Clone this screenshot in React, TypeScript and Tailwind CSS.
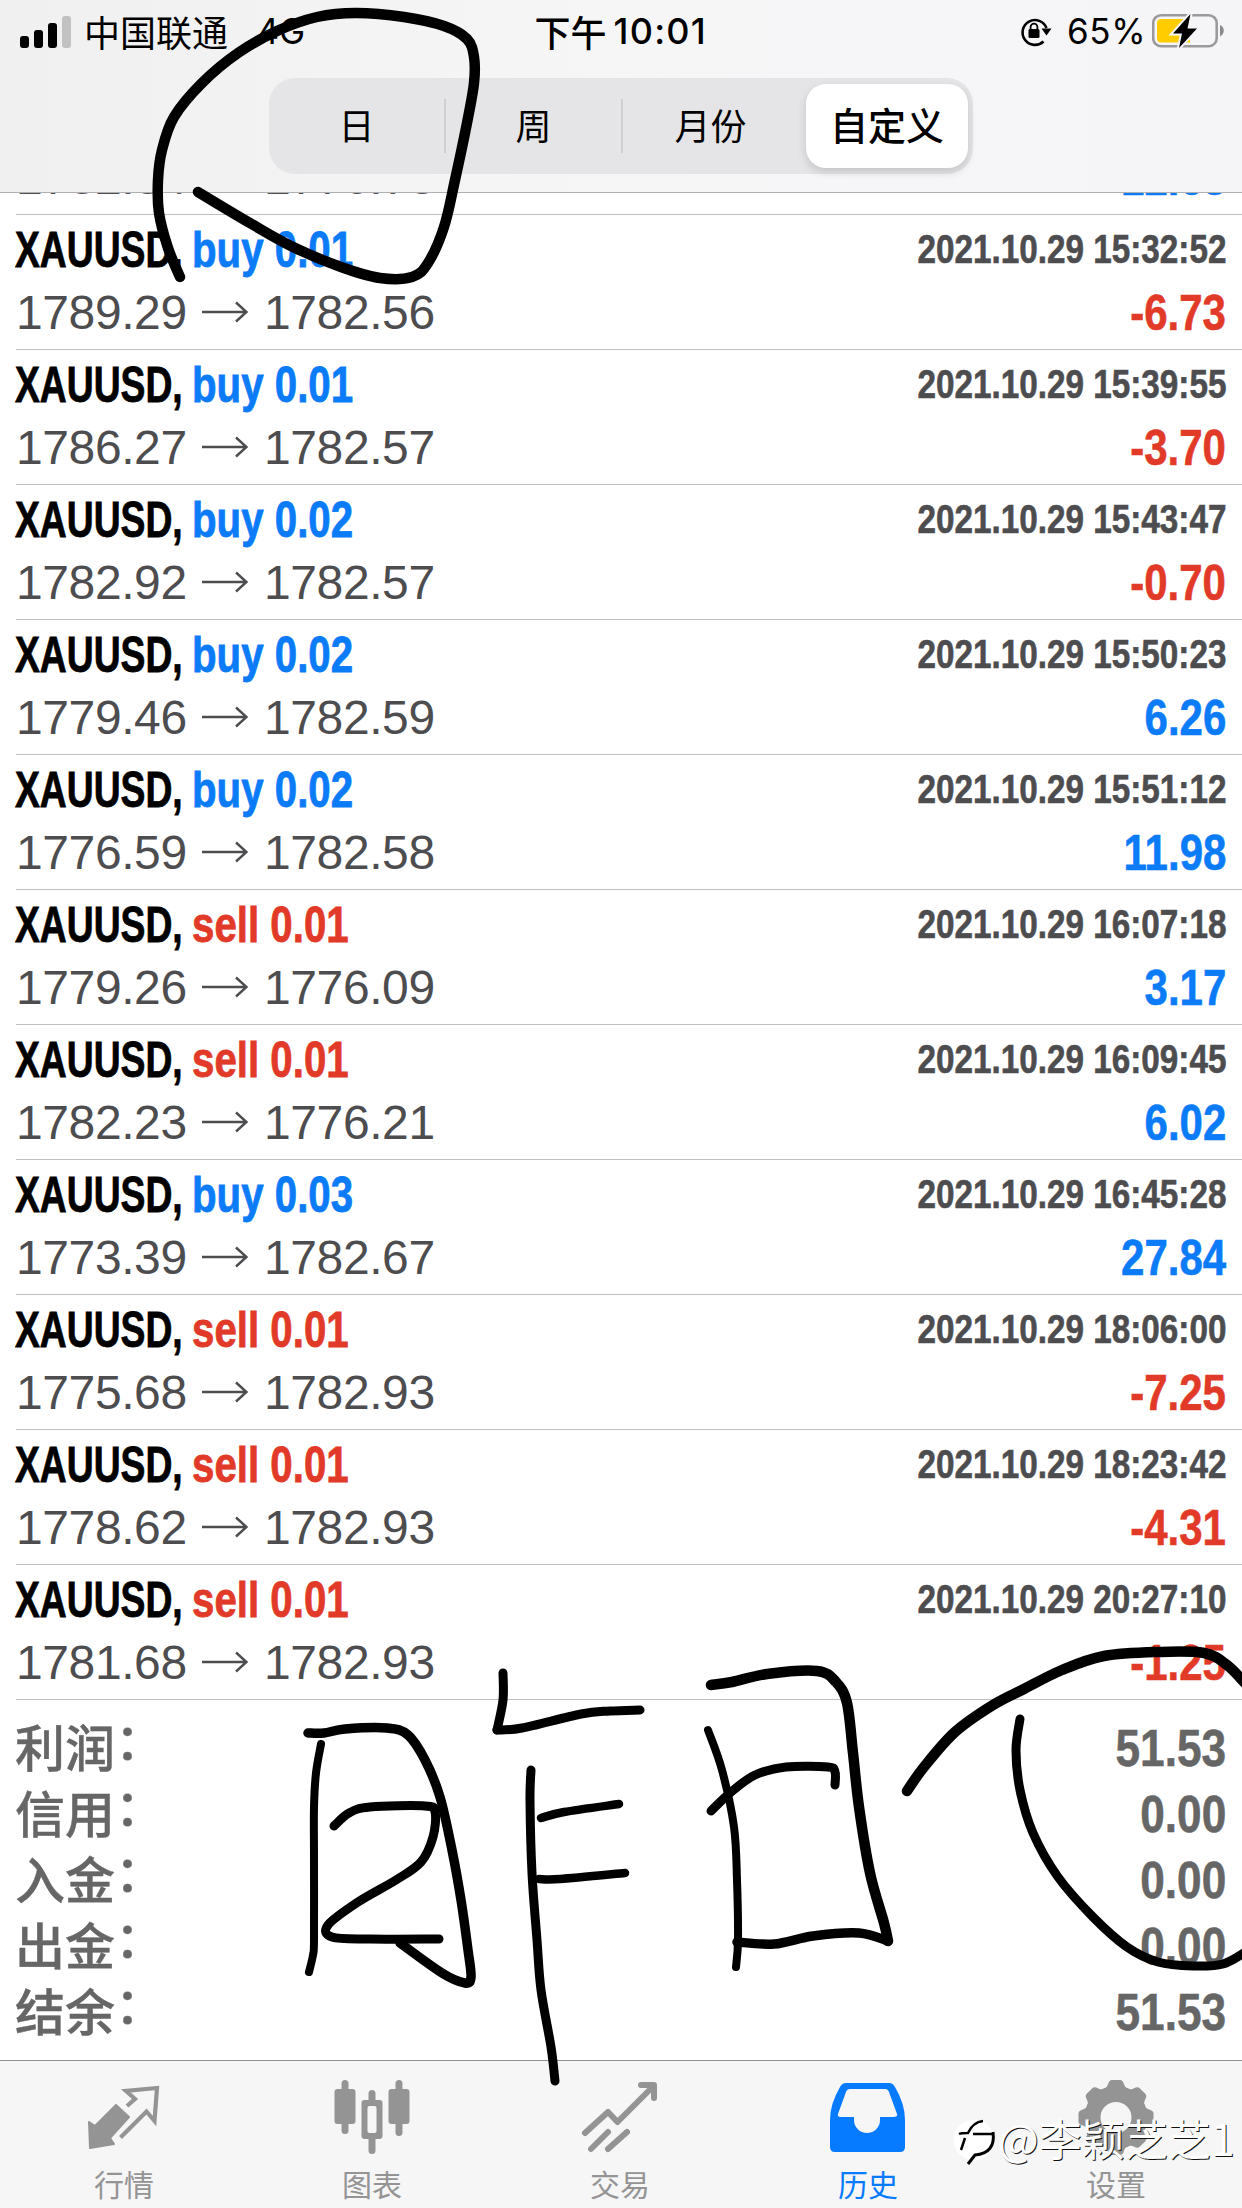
import type { ReactNode } from "react";
import { clsx } from "clsx";

type Point = [number, number];

interface Trade {
    side: "buy" | "sell";
    volume: string;
    open: string;
    close: string;
    time: string;
    profit: string;
}

const trades: Trade[] = [
    { side: "buy", volume: "0.02", open: "1782.84", close: "1776.78", time: "2021.10.29 15:30:12", profit: "12.68" },
    { side: "buy", volume: "0.01", open: "1789.29", close: "1782.56", time: "2021.10.29 15:32:52", profit: "-6.73" },
    { side: "buy", volume: "0.01", open: "1786.27", close: "1782.57", time: "2021.10.29 15:39:55", profit: "-3.70" },
    { side: "buy", volume: "0.02", open: "1782.92", close: "1782.57", time: "2021.10.29 15:43:47", profit: "-0.70" },
    { side: "buy", volume: "0.02", open: "1779.46", close: "1782.59", time: "2021.10.29 15:50:23", profit: "6.26" },
    { side: "buy", volume: "0.02", open: "1776.59", close: "1782.58", time: "2021.10.29 15:51:12", profit: "11.98" },
    { side: "sell", volume: "0.01", open: "1779.26", close: "1776.09", time: "2021.10.29 16:07:18", profit: "3.17" },
    { side: "sell", volume: "0.01", open: "1782.23", close: "1776.21", time: "2021.10.29 16:09:45", profit: "6.02" },
    { side: "buy", volume: "0.03", open: "1773.39", close: "1782.67", time: "2021.10.29 16:45:28", profit: "27.84" },
    { side: "sell", volume: "0.01", open: "1775.68", close: "1782.93", time: "2021.10.29 18:06:00", profit: "-7.25" },
    { side: "sell", volume: "0.01", open: "1778.62", close: "1782.93", time: "2021.10.29 18:23:42", profit: "-4.31" },
    { side: "sell", volume: "0.01", open: "1781.68", close: "1782.93", time: "2021.10.29 20:27:10", profit: "-1.25" },
];

const totals = [
    { label: "利润", value: "51.53" },
    { label: "信用", value: "0.00" },
    { label: "入金", value: "0.00" },
    { label: "出金", value: "0.00" },
    { label: "结余", value: "51.53" },
];

// Pen strokes drawn over the page: width and the points the pen went through
const strokes: { w: number; pts: Point[] }[] = [
    { w: 10.5, pts: [[180, 277], [168, 248], [159, 213], [158, 180], [162, 150], [174, 117], [202, 83], [238, 53], [277, 31], [317, 17], [356, 13], [404, 17], [444, 26], [467, 39], [474, 57], [474, 83], [467, 123], [455, 180], [444, 227], [428, 263], [412, 277], [380, 278], [341, 267], [293, 247], [250, 223], [198, 192]] },
    { w: 8, pts: [[321, 1744], [316, 1773], [314, 1807], [314, 1860], [314, 1940], [313, 1955], [309, 1972]] },
    { w: 9.5, pts: [[308, 1733], [324, 1733], [345, 1729], [387, 1728], [408, 1735], [425, 1760], [440, 1797], [452, 1850], [461, 1900], [468, 1950], [471, 1977], [465, 1983], [442, 1973], [400, 1943]] },
    { w: 9, pts: [[334, 1826], [349, 1813], [370, 1807], [425, 1806], [435, 1812], [433, 1837], [421, 1862], [396, 1880], [358, 1902], [328, 1925], [332, 1937], [370, 1939], [439, 1939]] },
    { w: 9, pts: [[503, 1673], [503, 1700], [497, 1730]] },
    { w: 9, pts: [[497, 1730], [522, 1728], [581, 1714], [610, 1711], [640, 1710]] },
    { w: 9, pts: [[531, 1770], [530, 1800], [532, 1873], [537, 1940], [541, 1990], [551, 2047], [555, 2081]] },
    { w: 8.5, pts: [[541, 1818], [564, 1812], [619, 1804]] },
    { w: 8.5, pts: [[539, 1879], [560, 1879], [625, 1873]] },
    { w: 10.5, pts: [[711, 1685], [732, 1682], [767, 1674], [817, 1671], [836, 1682], [847, 1703], [853, 1753], [859, 1807], [870, 1873], [884, 1923], [888, 1941]] },
    { w: 9.5, pts: [[888, 1941], [859, 1933], [813, 1936], [774, 1944], [737, 1942]] },
    { w: 8, pts: [[708, 1730], [722, 1770], [734, 1827], [737, 1880], [738, 1940], [736, 1967]] },
    { w: 9, pts: [[711, 1811], [730, 1793], [755, 1775], [786, 1767], [828, 1767], [835, 1772], [835, 1785]] },
    { w: 10.5, pts: [[907, 1791], [924, 1767], [955, 1732], [993, 1705], [1024, 1689], [1062, 1670], [1104, 1656], [1158, 1652], [1204, 1653], [1227, 1665], [1245, 1683]] },
    { w: 9, pts: [[1020, 1719], [1016, 1750], [1020, 1790], [1033, 1833], [1058, 1877], [1093, 1917], [1127, 1947], [1158, 1962], [1193, 1966], [1223, 1964], [1247, 1951]] },
];

// Catmull-Rom through all points, written as cubic beziers
function smoothPath(pts: Point[]) {
    let d = `M${pts[0][0]} ${pts[0][1]}`;
    for (let i = 0; i < pts.length - 1; i++) {
        const p0 = pts[i - 1] ?? pts[i];
        const p1 = pts[i];
        const p2 = pts[i + 1];
        const p3 = pts[i + 2] ?? p2;
        d += `C${p1[0] + (p2[0] - p0[0]) / 6} ${p1[1] + (p2[1] - p0[1]) / 6} ${p2[0] - (p3[0] - p1[0]) / 6} ${p2[1] - (p3[1] - p1[1]) / 6} ${p2[0]} ${p2[1]}`;
    }
    return d;
}

function StatusBar() {
    return (
        <div className="flex h-[62px] items-center pl-5 pr-4 text-black">
            <div className="flex h-[33px] items-end gap-[5px]">
                <div className="h-3 w-[9px] rounded-[3px] bg-black" />
                <div className="h-[18px] w-[9px] rounded-[3px] bg-black" />
                <div className="h-[25px] w-[9px] rounded-[3px] bg-black" />
                <div className="h-8 w-[9px] rounded-[3px] bg-[#c2c2c2]" />
            </div>
            <div className="ml-[13px] w-[173px] whitespace-nowrap text-[36px] leading-none font-['Noto_Sans_CJK_SC',sans-serif]">中国联通</div>
            <div className="w-[279px] font-['Inter',sans-serif] text-[35px] leading-none">4G</div>
            <div className="flex w-[485px] items-center whitespace-nowrap font-medium leading-none">
                <span className="text-[36px] font-['Noto_Sans_CJK_SC',sans-serif]">下午</span>
                <span className="ml-[7px] font-['Inter',sans-serif] text-[36px] tracking-[1.2px]">10:01</span>
            </div>
            <svg className="h-[34px] w-[34px] shrink-0" viewBox="0 0 34 34">
                <path d="M25.5 27.5A12.4 12.4 0 1 1 28.5 14" fill="none" stroke="#000" strokeWidth="2.6" />
                <path d="M23.5 14.5h10l-5 7z" />
                <rect x="10.5" y="15" width="11" height="9" rx="1.5" />
                <path d="M12.6 16v-3a3.4 3.4 0 0 1 6.8 0v3" fill="none" stroke="#000" strokeWidth="1.8" />
            </svg>
            <div className="ml-[15px] w-[85px] shrink-0 font-['Inter',sans-serif] text-[35px] leading-none tracking-[0.6px]">65%</div>
            <svg className="h-9 w-[74px] shrink-0" viewBox="0 0 74 36">
                <rect x="1.2" y="2.2" width="63.5" height="31" rx="8" fill="none" stroke="#9a9a9c" strokeWidth="2.6" />
                <path d="M68 12c5 2 5 9 0 11.500z" fill="#8a8a8c" />
                <path d="M9 6h29v23.500H9a4 4 0 0 1-4-4V10a4 4 0 0 1 4-4z" fill="#fc0" />
                <path d="M38.500 1 21 20.500h9L27 35l18-19.500h-9.500z" fill="#000" stroke="#f5f5f7" strokeWidth="4" paintOrder="stroke" />
            </svg>
        </div>
    );
}

function Segments() {
    return (
        <div className="ml-[269px] mt-4 flex h-24 w-[704px] items-center rounded-[26px] bg-[#e5e5e7] text-[36px] leading-none text-black font-['Noto_Sans_CJK_SC',sans-serif]">
            <div className="w-[175px] pb-1 text-center">日</div>
            <div className="h-[54px] w-0.5 bg-[#cfcfd1]" />
            <div className="w-[175px] pb-1 text-center">周</div>
            <div className="h-[54px] w-0.5 bg-[#cfcfd1]" />
            <div className="w-[175px] pb-1 text-center">月份</div>
            <div className="ml-2 flex h-[84px] w-[162px] items-center justify-center rounded-[20px] bg-white pb-1 text-[38px] font-medium shadow-[0_4px_10px_rgba(0,0,0,0.14)]">
                自定义
            </div>
        </div>
    );
}

function TradeRow({ trade }: { trade: Trade }) {
    return (
        <div className="ml-4 flex h-[135px] shrink-0 justify-between whitespace-nowrap border-b border-[#bfbfc3] pr-4 font-['Liberation_Sans',sans-serif]">
            <div className="pt-[10px]">
                <div className="flex text-[50px] font-bold leading-[50px] [-webkit-text-stroke:0.8px_currentColor]">
                    <div className="w-[176px]">
                        <span className="inline-block origin-left -translate-x-px scale-x-[0.745] text-black">XAUUSD,</span>
                    </div>
                    <span
                        className={clsx(
                            "inline-block origin-left scale-x-[0.805]",
                            trade.side === "buy" ? "text-[#0b7bf8]" : "text-[#e23a28]"
                        )}
                    >
                        {trade.side} {trade.volume}
                    </span>
                </div>
                <div className="mt-[14px] flex text-[48px] leading-[48px] tracking-[-0.4px] text-[#4d4d50]">
                    <span className="w-[186px]">{trade.open}</span>
                    <svg className="mr-4 mt-[11px] h-6 w-[46px]" viewBox="0 0 46 24" fill="none" stroke="currentColor" strokeWidth="2.4">
                        <path d="M0 12h44M34 2.500 44.500 12 34 21.500" />
                    </svg>
                    <span>{trade.close}</span>
                </div>
            </div>
            <div className="flex flex-col items-end pt-[14px] font-bold [-webkit-text-stroke:0.6px_currentColor]">
                <span className="inline-block origin-right scale-x-[0.832] text-[40px] leading-[40px] text-[#4d4d50]">{trade.time}</span>
                <span
                    className={clsx(
                        "mt-[19px] inline-block origin-right scale-x-[0.84] text-[50px] leading-[50px]",
                        trade.profit.startsWith("-") ? "text-[#e23a28]" : "text-[#0b7bf8]"
                    )}
                >
                    {trade.profit}
                </span>
            </div>
        </div>
    );
}

function Totals() {
    return (
        <div className="h-[360px] pl-[15px] pr-4 pt-[15px] text-[#666]">
            {totals.map((t) => (
                <div key={t.label} className="flex h-[66px] items-center justify-between">
                    <span className="flex pb-1.5 text-[50px] font-medium leading-[60px] font-['Noto_Sans_CJK_SC',sans-serif] [-webkit-text-stroke:0.4px_currentColor]">
                        {t.label}
                        <span className="-mt-[7px]">：</span>
                    </span>
                    <span className="inline-block origin-right scale-x-[0.85] pt-px font-['Liberation_Sans',sans-serif] text-[52px] font-bold leading-[65px] [-webkit-text-stroke:0.6px_currentColor]">
                        {t.value}
                    </span>
                </div>
            ))}
        </div>
    );
}

function TabItem({ label, active, children }: { label: string; active?: boolean; children: ReactNode }) {
    return (
        <div className={clsx("flex w-[248px] flex-col items-center pt-[15px]", active ? "text-[#067bff]" : "text-[#949494]")}>
            {children}
            <span className="mt-3 text-[30px] leading-[30px] font-['Noto_Sans_CJK_SC',sans-serif]">{label}</span>
        </div>
    );
}

function TabBar() {
    return (
        <div className="flex h-[148px] border-t border-[#8f8f8f] bg-[#f6f6f6]">
            <TabItem label="行情">
                <svg className="h-20 w-20" viewBox="84 2076 80 80" fill="none" stroke="currentColor" strokeLinejoin="round">
                    <path d="M127 2106l8-7-9-8 31-3-2.500 33-8-9.500-26 26" strokeWidth="4.200" strokeLinejoin="miter" />
                    <path d="M116 2105l13 12-19 21 4 6-24 4-1-26 6 4z" fill="currentColor" strokeWidth="2" />
                </svg>
            </TabItem>
            <TabItem label="图表">
                <svg className="h-20 w-20" viewBox="332.500 2076 80 80" fill="currentColor">
                    <rect x="335" y="2089" width="21" height="35" rx="3" />
                    <rect x="342" y="2080" width="7" height="54" rx="3.500" />
                    <path fillRule="evenodd" d="M365 2100h15a3 3 0 0 1 3 3v33a3 3 0 0 1-3 3h-15a3 3 0 0 1-3-3v-33a3 3 0 0 1 3-3zm5 6a2 2 0 0 0-2 2v23a2 2 0 0 0 2 2h5a2 2 0 0 0 2-2v-23a2 2 0 0 0-2-2z" />
                    <path d="M369 2101v-7.500a3.500 3.500 0 0 1 7 0v7.500zM369 2138v12.500a3.500 3.500 0 0 0 7 0V2138z" />
                    <rect x="389" y="2089" width="21" height="35" rx="3" />
                    <rect x="396" y="2080" width="7" height="56" rx="3.500" />
                </svg>
            </TabItem>
            <TabItem label="交易">
                <svg className="h-20 w-20" viewBox="580 2076 80 80" fill="none" stroke="currentColor" strokeWidth="6" strokeLinecap="round" strokeLinejoin="round">
                    <path d="M585 2133l23-21 9.500 10 36-36" />
                    <path d="M641 2085h13v13" />
                    <path d="M591 2149l17-17M608 2149l19-17" />
                </svg>
            </TabItem>
            <TabItem label="历史" active>
                <svg className="h-20 w-20" viewBox="828 2076 80 80" fill="currentColor">
                    <path
                        fillRule="evenodd"
                        d="M846 2083h43q4 0 6 4 10 17 10 33v27q0 5-5 5h-65q-5 0-5-5v-27q0-16 10-33 2-4 6-4zm4 6q-3 0-4 3l-8 22q-1 3 3 3h13v3a13 13 0 0 0 26 0v-3h13q5 0 4-3l-8-22q-1-3-4-3z"
                    />
                </svg>
            </TabItem>
            <TabItem label="设置">
                <svg className="h-20 w-20" viewBox="-40 -41.500 80 80">
                    <circle r="23.500" fill="none" stroke="currentColor" strokeWidth="16" />
                    {[0, 45, 90, 135, 180, 225, 270, 315].map((a) => (
                        <path key={a} d="M-12-28Q-9-30-8-33-7-37.500-4-37.500H4Q7-37.500 8-33 9-30 12-28z" transform={`rotate(${a})`} fill="currentColor" />
                    ))}
                </svg>
            </TabItem>
        </div>
    );
}

function Watermark() {
    return (
        <div className="absolute left-[953px] top-[2112px] flex items-start whitespace-nowrap">
            <svg className="mt-[5px] h-[50px] w-[46px]" viewBox="0 0 46 50">
                <circle cx="21" cy="23" r="20.500" fill="#fff" />
                <path d="M6 17q2-1 9-1 5-11 15-12M20 17h20M12 21 8 33" fill="none" stroke="#000" strokeWidth="2.500" />
                <path d="M40 15Q43 36 22 38l-7 9" fill="none" stroke="#000" strokeWidth="3" />
            </svg>
            <span className="-ml-px text-[43px] leading-[50px] text-white font-['Noto_Sans_CJK_SC',sans-serif] [text-shadow:1px_1px_0_#111]">@李颖芝芝1</span>
        </div>
    );
}

export default function App() {
    return (
        <div className="relative flex h-[2208px] w-[1242px] flex-col overflow-hidden bg-white">
            <div className="h-[193px] shrink-0 border-b border-[#b0b0b2] bg-linear-to-r from-[#f0f0f0] via-[#f7f6f7] to-[#f5f5f8]">
                <StatusBar />
                <Segments />
            </div>
            <div className="flex h-[1507px] shrink-0 flex-col justify-end overflow-hidden">
                {trades.map((t) => (
                    <TradeRow key={t.time} trade={t} />
                ))}
            </div>
            <Totals />
            <TabBar />
            <Watermark />
            <svg className="pointer-events-none absolute left-0 top-0 h-[2208px] w-[1242px]" viewBox="0 0 1242 2208" fill="none" stroke="#000" strokeLinecap="round" strokeLinejoin="round">
                {strokes.map((s, i) => (
                    <path key={i} d={smoothPath(s.pts)} strokeWidth={s.w} />
                ))}
            </svg>
        </div>
    );
}
